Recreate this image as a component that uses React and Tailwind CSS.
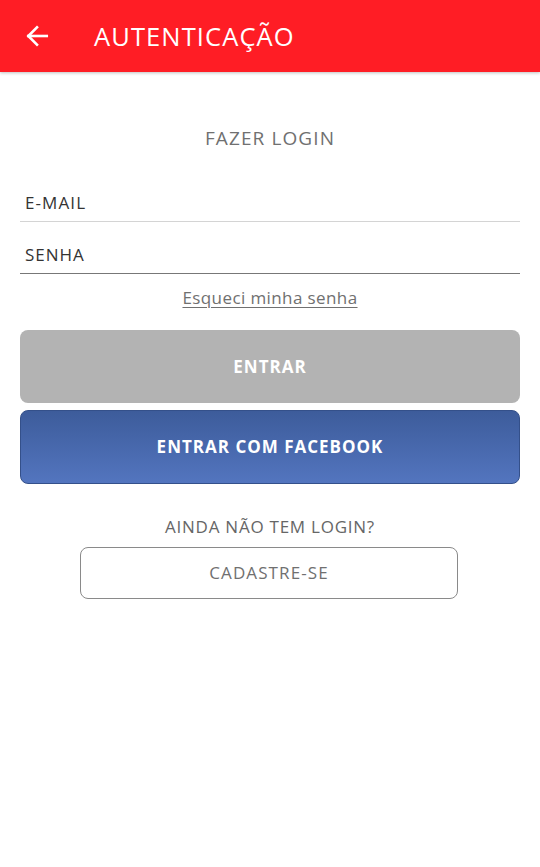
import React from "react";

export default function App() {
  const font = { fontFamily: '"Open Sans", "Noto Sans", sans-serif' };
  return (
    <div className="w-[540px] h-[867px] bg-white" style={font}>
      <div className="h-[72px] bg-[#ff1d25] flex items-center shadow-[0_1px_3px_rgba(0,0,0,0.25)] relative z-10">
        <svg className="ml-[24px]" width="26" height="26" viewBox="0 0 24 24" fill="none" stroke="white" strokeWidth="2.4" strokeLinecap="square">
          <path d="M21 12H4" />
          <path d="M12 4l-8 8 8 8" />
        </svg>
        <span className="ml-[44px] text-white text-[25.5px] tracking-[1.1px]">AUTENTICAÇÃO</span>
      </div>
      <div className="px-[20px] flex flex-col">
        <div className="mt-[52px] text-center text-[19px] text-[#707070] leading-[28px] tracking-[1.1px]">FAZER LOGIN</div>
        <div className="mt-[35px] h-[35px] border-b border-[#d4d4d4] flex items-end pb-[7px] pl-[5px] text-[17px] text-[#333] leading-[22px] tracking-[1.1px]">E-MAIL</div>
        <div className="mt-[17px] h-[35px] border-b border-[#777] flex items-end pb-[7px] pl-[5px] text-[17px] text-[#333] leading-[22px] tracking-[1px]">SENHA</div>
        <div className="mt-[12px] text-center text-[17px] text-[#707070] underline underline-offset-[3px] leading-[24px] tracking-[0.4px]">Esqueci minha senha</div>
        <div className="mt-[20px] h-[73px] rounded-[8px] bg-[#b3b3b3] flex items-center justify-center text-white font-bold text-[17px] tracking-[1px]">ENTRAR</div>
        <div className="mt-[7px] h-[74px] rounded-[8px] bg-gradient-to-b from-[#3d5c9b] to-[#5375bf] border border-[#34508a] flex items-center justify-center text-white font-bold text-[17px] tracking-[1px]">ENTRAR COM FACEBOOK</div>
        <div className="mt-[31px] text-center text-[17px] text-[#666] leading-[24px] tracking-[0.75px]">AINDA NÃO TEM LOGIN?</div>
        <div className="mt-[8px] mx-[60px] w-[378px] h-[52px] rounded-[8px] border border-[#8a8a8a] flex items-center justify-center text-[17px] text-[#707070] tracking-[1.1px]">CADASTRE-SE</div>
      </div>
    </div>
  );
}
